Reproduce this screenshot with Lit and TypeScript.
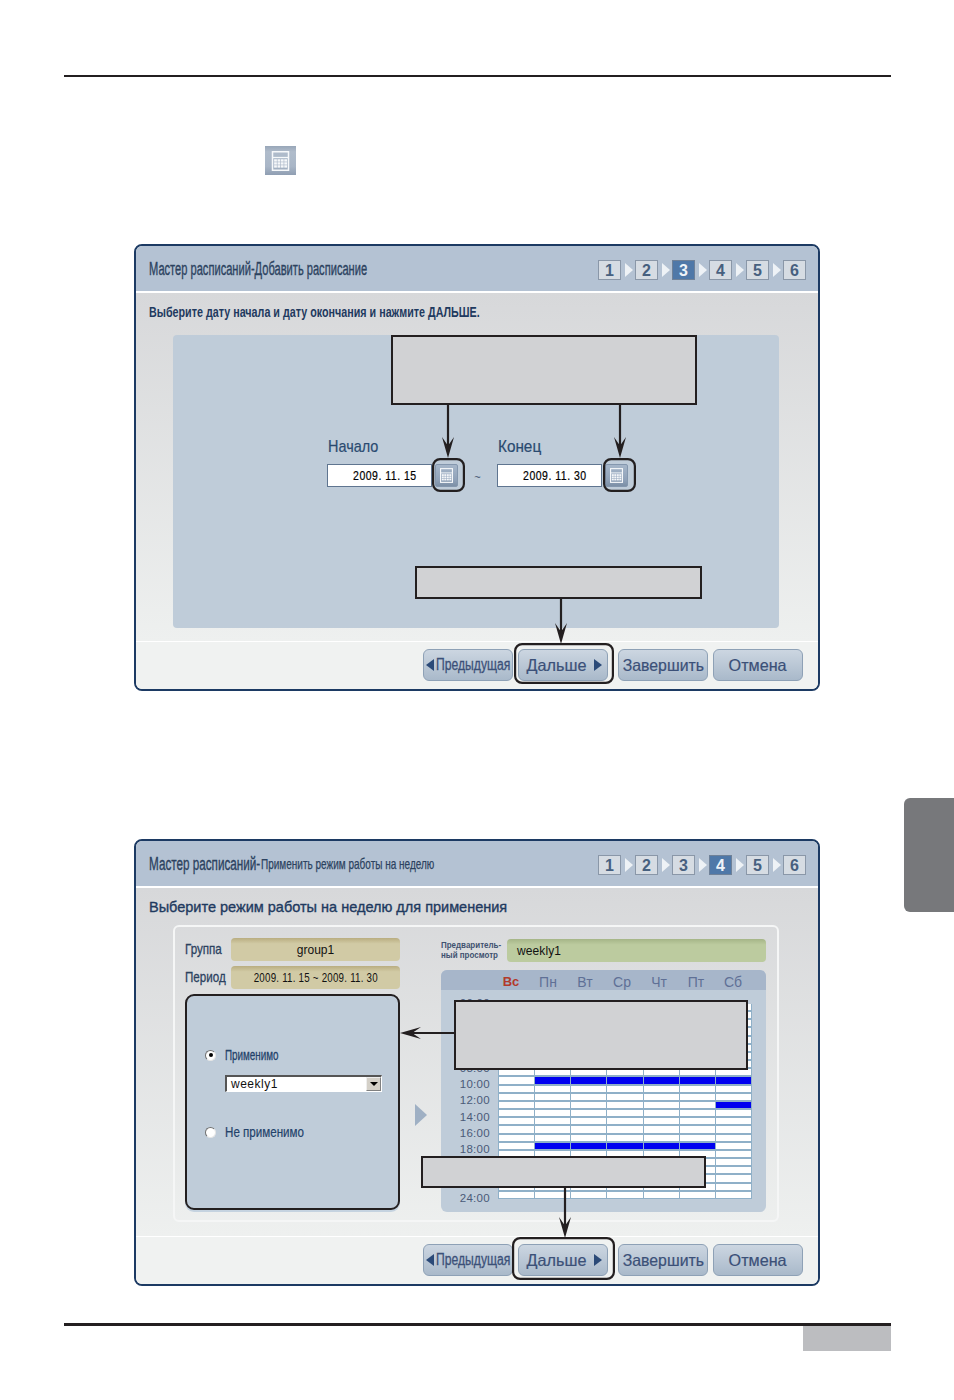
import { LitElement, html, css, svg } from "lit";
import { customElement } from "lit/decorators.js";

const days = ["Вс", "Пн", "Вт", "Ср", "Чт", "Пт", "Сб"];
const times = Array.from({ length: 13 }, (_, i) => `${String(i * 2).padStart(2, "0")}:00`);
const filled = (row: number, col: number) =>
  (row === 9 && col >= 1) || (row === 12 && col === 6) || (row === 17 && col >= 1 && col <= 5);

const calcIcon = (cls: string) => html`<svg class=${cls} viewBox="0 0 14 16" aria-hidden="true">
  <rect x="0.6" y="0.6" width="12.8" height="14.8" fill="none" stroke="#f6f8fa" stroke-width="1.2" />
  <line x1="1" y1="5.2" x2="13" y2="5.2" stroke="#f6f8fa" stroke-width="1" />
  ${[6.6, 9, 11.4].map((y) =>
    [1.9, 4.6, 7.3, 10].map((x) => svg`<rect x=${x} y=${y} width="2.2" height="1.9" fill="#f6f8fa" />`)
  )}
</svg>`;

const arrow = (x1: number, y1: number, x2: number, y2: number) => {
  const dx = Math.sign(x2 - x1);
  const dy = Math.sign(y2 - y1);
  const len = 21, w = 6, notch = 14;
  const px = -dy, py = dx;
  const pts = [
    [x2, y2],
    [x2 - dx * len + px * w, y2 - dy * len + py * w],
    [x2 - dx * notch + px * 1.2, y2 - dy * notch + py * 1.2],
    [x2 - dx * notch - px * 1.2, y2 - dy * notch - py * 1.2],
    [x2 - dx * len - px * w, y2 - dy * len - py * w],
  ].map((p) => p.join(",")).join(" ");
  return svg`<line x1=${x1} y1=${y1} x2=${x2 - dx * notch} y2=${y2 - dy * notch} stroke="#231f20" stroke-width="2.2" />
    <polygon points=${pts} fill="#231f20" />`;
};
const box = (x1: number, y1: number, x2: number, y2: number) =>
  svg`<rect x=${x1 + 1} y=${y1 + 1} width=${x2 - x1 - 2} height=${y2 - y1 - 2} fill="#d1d2d4" stroke="#231f20" stroke-width="2" />`;
const ring = (x1: number, y1: number, x2: number, y2: number, r = 7) =>
  svg`<rect x=${x1 + 1.1} y=${y1 + 1.1} width=${x2 - x1 - 2.2} height=${y2 - y1 - 2.2} rx=${r} fill="none" stroke="#231f20" stroke-width="2.2" />`;

@customElement("app-root")
export class AppRoot extends LitElement {
  static styles = css`
    :host { display: block; }
    .page { position: relative; width: 954px; height: 1400px; background: #fff; padding-top: 75px; box-sizing: border-box; overflow: hidden;
      font-family: "Liberation Sans", Arial, sans-serif; color: #1f3a5f; }
    .rule { height: 2px; margin: 0 63px 0 64px; background: #231f20; }
    .top-icon { width: 31px; height: 29px; margin: 69px 0 0 265px; display: flex; align-items: center; justify-content: center;
      background: linear-gradient(#98a6b8, #b0bccb 20%, #a9b6c7 70%, #8f9eb2); }
    .ic-lg { width: 19px; height: 20px; }
    .ic-sm { width: 13px; height: 15px; }
    .tab { position: absolute; top: 798px; right: 0; width: 50px; height: 114px; background: #77787b; border-radius: 6px 0 0 6px; }
    .foot-rule { height: 3px; margin: 37px 63px 0 64px; background: #231f20; }
    .foot-box { width: 88px; height: 25px; margin-left: 803px; background: #bcbdc0; }

    .win { position: relative; box-sizing: border-box; width: 686px; height: 447px; margin-left: 134px; border: 2px solid #1c3a63;
      border-radius: 8px; background: #eef0ef; display: flex; flex-direction: column; overflow: hidden; }
    .first { margin-top: 69px; }
    .second { margin-top: 148px; }
    .head { flex: none; height: 44px; padding-top: 1px; box-sizing: content-box; border-bottom: 2px solid #fff; background: #b4c2d3; display: flex; align-items: center; padding-left: 13px; }
    .body { flex: none; height: 348px; background: linear-gradient(#d7d8da, #eef0ef); padding-left: 37px; box-sizing: border-box; }
    .inst { height: 37px; margin-left: -24px; display: flex; align-items: center; }
    .foot { flex: 1; border-top: 1.5px solid #fff; background: #f0f2f1; position: relative; }
    .overlay { position: absolute; left: -2px; top: -2px; width: 686px; height: 447px; pointer-events: none; }

    .t { display: inline-block; white-space: nowrap; transform-origin: left center; }
    .title { font-size: 18px; color: #2c4260; -webkit-text-stroke: .35px #2c4260; transform: scaleX(.617); width: 0; }
    .title-a { font-size: 18px; color: #2c4260; -webkit-text-stroke: .35px #2c4260; transform: scaleX(.65); width: 112px; }
    .title-b { font-size: 14.5px; color: #2c4260; -webkit-text-stroke: .25px #2c4260; transform: scaleX(.69); width: 0; }
    .i1 { font-size: 14px; font-weight: 700; color: #1f3a5f; transform: scaleX(.767); }
    .i2 { font-size: 14.5px; color: #1f3a5f; transform: scaleX(1); -webkit-text-stroke: .35px #1f3a5f; }

    .steps { position: absolute; top: 14px; left: 462px; display: flex; align-items: center; }
    .step { width: 23px; height: 20px; box-sizing: border-box; border: 1px solid #8a97a8; background: #d6dce3; color: #47607f;
      font-size: 16px; font-weight: 700; display: flex; align-items: center; justify-content: center; padding-top: 1px; }
    .step.on { background: #4f78a8; color: #eef3f8; border-color: #6f8198; }
    .tri { width: 14px; display: flex; justify-content: center; }
    .tri i { display: block; width: 0; height: 0; border-left: 8px solid #eef2f6; border-top: 7px solid transparent; border-bottom: 7px solid transparent; margin-left: 1px; }

    .panel { width: 606px; height: 293px; margin-top: 5px; background: #bfccd9; border-radius: 4px; box-sizing: border-box; padding: 101px 0 0 154px; }
    .lab-row { display: flex; height: 22px; align-items: center; padding-left: 1px; }
    .lab { font-size: 17px; color: #2a4a70; -webkit-text-stroke: .2px #2a4a70; transform: scaleX(.85); width: 170px; }
    .lab + .lab { transform: scaleX(.9); }
    .date-row { display: flex; align-items: center; margin-top: 6px; height: 23px; }
    .date { width: 105px; height: 23px; box-sizing: border-box; border: 1px solid #5f7590; background: #fff; display: flex; align-items: center; justify-content: center; padding-left: 10px; }
    .dv { font-size: 12.5px; color: #000; letter-spacing: .6px; -webkit-text-stroke: .2px #000; transform: scaleX(.84); transform-origin: center; }
    .cal { width: 23px; height: 23px; margin-left: 3px; box-sizing: border-box; border: 1px solid #8497ae; border-radius: 2px; background: linear-gradient(#a6b6c9, #90a2b9 70%, #7c8fa6);
      display: flex; align-items: center; justify-content: center; }
    .til { width: 39px; text-align: center; font-size: 11px; color: #3a4f6c; padding-top: 3px; box-sizing: border-box; }

    .btns { position: absolute; top: 7px; left: 287px; display: flex; height: 32px; }
    .btn { height: 32px; box-sizing: border-box; border: 1px solid #8ea1b6; border-radius: 6px; background: linear-gradient(#ccd6e1, #a9b9ca);
      color: #3b5078; font-size: 16.5px; -webkit-text-stroke: .2px #3b5078; display: flex; align-items: center; justify-content: center; white-space: nowrap; }
    .b1 { width: 90px; justify-content: flex-start; padding-left: 2px; margin-right: 5px; }
    .b2 { width: 90px; margin-right: 10px; padding-left: 2px; }
    .b3 { width: 90px; margin-right: 5px; }
    .b4 { width: 90px; }
    .tl { border-right: 8px solid #2b4a78; border-top: 6px solid transparent; border-bottom: 6px solid transparent; flex: none; }
    .tr { border-left: 8px solid #2b4a78; border-top: 6px solid transparent; border-bottom: 6px solid transparent; flex: none; margin-left: 7px; }
    .bt { transform-origin: center; }
    .bt1 { font-size: 16px; -webkit-text-stroke: .3px #3b5078; transform: scaleX(.76); transform-origin: left center; width: 76px; margin-left: 2px; }
    .bt2 { transform: scaleX(.98); }
    .bt3 { transform: scaleX(.96); }
    .bt4 { transform: scaleX(.98); }

    .frame { width: 606px; height: 297px; box-sizing: border-box; border: 2px solid #f5f6f6; border-radius: 6px; padding: 11px 0 0 10px; display: flex; align-items: flex-start; }
    .left { width: 215px; flex: none; display: flex; flex-direction: column; }
    .f-row { display: flex; align-items: center; height: 23px; margin-bottom: 5px; }
    .f-lab { width: 46px; flex: none; font-size: 14.5px; color: #2c4260; -webkit-text-stroke: .3px #2c4260; transform: scaleX(.8); padding-bottom: 2px; }
    .tan { width: 169px; height: 23px; border-radius: 4px; background: linear-gradient(#b9ad80, #d1caa5 25%, #d1caa5); display: flex; align-items: center; justify-content: center;
      font-size: 12px; color: #111; }
    .tv { transform-origin: center; }
    .tv2 { font-size: 13px; transform: scaleX(.75); letter-spacing: .3px; }
    .bluebox { height: 216px; box-sizing: border-box; border: 2.5px solid #231f20; border-radius: 9px; background: #bfccd9; box-shadow: 0 2px 0 #c5d3e0; padding: 51px 0 0 18px; }
    .rad-row { display: flex; align-items: center; height: 16px; }
    .rad { width: 11px; height: 11px; flex: none; box-sizing: border-box; border-radius: 50%; background: #fff; border: 1px solid #707070; border-right-color: #e6e6e6; border-bottom-color: #e6e6e6; display: flex; align-items: center; justify-content: center; }
    .rad i { display: block; width: 4px; height: 4px; border-radius: 50%; background: #000; }
    .rlab { margin-left: 9px; font-size: 14.5px; color: #23426a; -webkit-text-stroke: .3px #23426a; transform: scaleX(.68); }
    .rlab2 { transform: scaleX(.8); -webkit-text-stroke: .2px #23426a; }
    .sel { width: 157px; height: 17px; margin: 12px 0 32px 20px; box-sizing: border-box; background: #fff; border-top: 2px solid #555; border-left: 2px solid #555; border-right: 1px solid #fff; border-bottom: 1px solid #fff; display: flex; align-items: center; justify-content: space-between; font-size: 12px; color: #111; padding-left: 4px; letter-spacing: .5px; }
    .sel-b { width: 15px; height: 14px; box-sizing: border-box; background: #d4d0c8; border: 1px solid #808080; border-top-color: #eee; border-left-color: #eee; display: flex; align-items: center; justify-content: center; }
    .sel-b i { border-top: 4px solid #000; border-left: 4px solid transparent; border-right: 4px solid transparent; }
    .next { width: 12px; height: 22px; flex: none; margin: 166px 14px 0 15px; }
    .right { width: 325px; flex: none; display: flex; flex-direction: column; }
    .pv-row { display: flex; align-items: center; height: 23px; margin: 1px 0 8px; }
    .pv-lab { width: 66px; flex: none; font-size: 9.5px; line-height: 10px; font-weight: 700; color: #3f5270; padding-bottom: 2px; }
    .pv-lab span { transform: scaleX(.84); display: block; white-space: nowrap; transform-origin: left center; }
    .green { flex: 1; height: 23px; border-radius: 4px; background: linear-gradient(#a5b587, #bccb9f 25%); display: flex; align-items: center; padding-left: 10px; font-size: 12px; color: #111; letter-spacing: .1px; }
    .sched { height: 242px; border-radius: 6px; background: #bfccd9; overflow: hidden; }
    .s-head { height: 20px; box-sizing: border-box; padding-top: 3px; background: #a7b6ca; padding-left: 51.5px; display: grid; grid-template-columns: repeat(7, 37px); align-items: center; justify-items: center; font-size: 14px; color: #5f7096; }
    .s-head .sun { color: #b23a2a; font-weight: 700; font-size: 13px; }
    .s-body { display: flex; align-items: flex-start; }
    .times { width: 49px; margin: 5px 8px 0 0; text-align: right; font-size: 11.5px; letter-spacing: .3px; color: #4a5a78; }
    .times div { height: 16.22px; line-height: 16.22px; }
    .grid { margin-top: 14px; width: 254px; height: 195px; box-sizing: border-box; background: #8fb0c8; border: 1px solid #8fb0c8; border-top-width: 0; display: grid; grid-template-columns: repeat(7, 1fr); grid-template-rows: repeat(24, 1fr); column-gap: 1px; row-gap: 2px; }
    .cell { background: #fff; }
    .cell.fill { background: #0000f0; }
  `;

  private steps(active: number) {
    return html`<div class="steps">
      ${[1, 2, 3, 4, 5, 6].map(
        (n) => html`${n > 1 ? html`<span class="tri"><i></i></span>` : ""}<span class="step ${n === active ? "on" : ""}">${n}</span>`
      )}
    </div>`;
  }

  private footer() {
    return html`<div class="foot">
      <div class="btns">
        <div class="btn b1"><span class="tl"></span><span class="t bt1">Предыдущая</span></div>
        <div class="btn b2"><span class="t bt bt2">Дальше</span><span class="tr"></span></div>
        <div class="btn b3"><span class="t bt bt3">Завершить</span></div>
        <div class="btn b4"><span class="t bt bt4">Отмена</span></div>
      </div>
    </div>`;
  }

  private first() {
    return html`<section class="win first">
      <div class="head"><span class="t title">Мастер расписаний-Добавить расписание</span>${this.steps(3)}</div>
      <div class="body">
        <div class="inst"><span class="t i1">Выберите дату начала и дату окончания и нажмите ДАЛЬШЕ.</span></div>
        <div class="panel">
          <div class="lab-row"><span class="t lab">Начало</span><span class="t lab">Конец</span></div>
          <div class="date-row">
            <div class="date"><span class="t dv">2009. 11. 15</span></div>
            <div class="cal">${calcIcon("ic-sm")}</div>
            <div class="til">~</div>
            <div class="date"><span class="t dv">2009. 11. 30</span></div>
            <div class="cal">${calcIcon("ic-sm")}</div>
          </div>
        </div>
      </div>
      ${this.footer()}
      <svg class="overlay" viewBox="134 244 686 447" aria-hidden="true">
        ${box(391, 335, 697, 405)} ${box(415, 566, 702, 599)}
        ${arrow(448, 405, 448, 458)} ${arrow(620, 405, 620, 458)} ${arrow(561, 599, 561, 644)}
        ${ring(432, 458, 465, 492)} ${ring(603, 458, 636, 492)} ${ring(514, 643, 614, 684)}
      </svg>
    </section>`;
  }

  private second() {
    return html`<section class="win second">
      <div class="head"><span class="t title-a">Мастер расписаний-</span><span class="t title-b">Применить режим работы на неделю</span>${this.steps(4)}</div>
      <div class="body">
        <div class="inst"><span class="t i2">Выберите режим работы на неделю для применения</span></div>
        <div class="frame">
          <div class="left">
            <div class="f-row"><span class="t f-lab">Группа</span><div class="tan"><span class="t tv">group1</span></div></div>
            <div class="f-row"><span class="t f-lab">Период</span><div class="tan"><span class="t tv tv2">2009. 11. 15 ~ 2009. 11. 30</span></div></div>
            <div class="bluebox">
              <div class="rad-row"><span class="rad"><i></i></span><span class="t rlab">Применимо</span></div>
              <div class="sel"><span>weekly1</span><span class="sel-b"><i></i></span></div>
              <div class="rad-row"><span class="rad"></span><span class="t rlab rlab2">Не применимо</span></div>
            </div>
          </div>
          <svg class="next" viewBox="0 0 12 22" aria-hidden="true"><polygon points="0,0 12,11 0,22" fill="#9fb0c4" /></svg>
          <div class="right">
            <div class="pv-row">
              <div class="pv-lab"><span>Предваритель-</span><span>ный просмотр</span></div>
              <div class="green">weekly1</div>
            </div>
            <div class="sched">
              <div class="s-head">${days.map((d, i) => html`<span class=${i === 0 ? "sun" : ""}>${d}</span>`)}</div>
              <div class="s-body">
                <div class="times">${times.map((t) => html`<div>${t}</div>`)}</div>
                <div class="grid">
                  ${Array.from({ length: 24 }, (_, r) =>
                    days.map((_d, c) => html`<div class="cell ${filled(r, c) ? "fill" : ""}"></div>`)
                  )}
                </div>
              </div>
            </div>
          </div>
        </div>
      </div>
      ${this.footer()}
      <svg class="overlay" viewBox="134 839 686 447" aria-hidden="true">
        ${box(454, 1000, 748, 1070)} ${box(421, 1156, 706, 1188)}
        ${arrow(455, 1033, 400, 1033)} ${arrow(565, 1188, 565, 1238)}
        ${ring(512, 1237, 615, 1280)}
      </svg>
    </section>`;
  }

  render() {
    return html`<div class="page">
      <div class="rule"></div>
      <div class="top-icon">${calcIcon("ic-lg")}</div>
      ${this.first()}
      ${this.second()}
      <div class="foot-rule"></div>
      <div class="foot-box"></div>
      <div class="tab"></div>
    </div>`;
  }
}
